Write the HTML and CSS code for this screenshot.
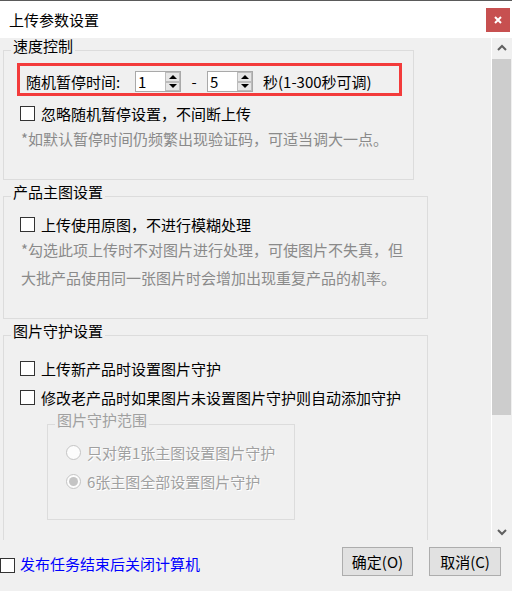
FILE: index.html
```html
<!DOCTYPE html>
<html lang="zh-CN">
<head>
    <meta charset="UTF-8">
    <meta name="viewport" content="width=device-width, initial-scale=1.0">
    <title>上传参数设置</title>
    <link rel="stylesheet" href="styles.css">
</head>
<body>

    <div class="window">
        <div class="titlebar">
            <span class="title">上传参数设置</span>
            <span class="close">
                <svg width="8" height="8" viewBox="0 0 8 8"><path d="M1 1L7 7M7 1L1 7" stroke="#fff" stroke-width="2"/></svg>
            </span>
        </div>

        <div class="main">
            <div class="content">
                <fieldset class="group g1">
                    <legend>速度控制</legend>
                    <div class="pause-row">
                        <span class="pause-label">随机暂停时间:</span>
                        <span class="spin">
                            <span class="spin-val">1</span>
                            <span class="spin-btns"><span class="spin-up"></span><span class="spin-down"></span></span>
                        </span>
                        <span class="dash">-</span>
                        <span class="spin">
                            <span class="spin-val">5</span>
                            <span class="spin-btns"><span class="spin-up"></span><span class="spin-down"></span></span>
                        </span>
                        <span class="unit">秒(1-300秒可调)</span>
                    </div>
                    <label class="check"><span class="box"></span>忽略随机暂停设置，不间断上传</label>
                    <p class="note">*如默认暂停时间仍频繁出现验证码，可适当调大一点。</p>
                </fieldset>

                <fieldset class="group g2">
                    <legend>产品主图设置</legend>
                    <label class="check"><span class="box"></span>上传使用原图，不进行模糊处理</label>
                    <p class="note">*勾选此项上传时不对图片进行处理，可使图片不失真，但<br>大批产品使用同一张图片时会增加出现重复产品的机率。</p>
                </fieldset>

                <fieldset class="group g3">
                    <legend>图片守护设置</legend>
                    <label class="check first"><span class="box"></span>上传新产品时设置图片守护</label>
                    <label class="check"><span class="box"></span>修改老产品时如果图片未设置图片守护则自动添加守护</label>
                    <fieldset class="group inner">
                        <legend>图片守护范围</legend>
                        <label class="radio"><span class="dot"></span>只对第1张主图设置图片守护</label>
                        <label class="radio"><span class="dot checked"></span>6张主图全部设置图片守护</label>
                    </fieldset>
                </fieldset>
            </div>

            <div class="scrollbar">
                <div class="sb-btn">
                    <svg width="10" height="7" viewBox="0 0 10 7"><path d="M1 6L5 2L9 6" fill="none" stroke="#606060" stroke-width="2"/></svg>
                </div>
                <div class="sb-thumb"></div>
                <div class="sb-track"></div>
                <div class="sb-btn">
                    <svg width="10" height="7" viewBox="0 0 10 7"><path d="M1 1L5 5L9 1" fill="none" stroke="#606060" stroke-width="2"/></svg>
                </div>
            </div>
        </div>

        <div class="footer">
            <label class="check shutdown"><span class="box"></span>发布任务结束后关闭计算机</label>
            <div class="buttons">
                <button class="btn ok">确定(O)</button>
                <button class="btn cancel">取消(C)</button>
            </div>
        </div>
    </div>

</body>
</html>
```

FILE: styles.css
```css
body {
    margin: 0;
    font-family: "Noto Sans CJK SC", sans-serif;
    font-size: 15px;
    color: #000;
    overflow: hidden;
}
.window {
    width: 512px;
    height: 591px;
    box-sizing: border-box;
    border-top: 1px solid #5a5a5a;
    background: #f0f0f0;
    display: flex;
    flex-direction: column;
}
.titlebar {
    height: 37px;
    background: white;
    display: flex;
    align-items: center;
    justify-content: space-between;
    padding-left: 9px;
}
.close {
    width: 24px;
    height: 24px;
    margin-right: 2px;
    background: #c75050;
    display: flex;
    align-items: center;
    justify-content: center;
}
.main {
    height: 504px;
    display: flex;
}
.content {
    flex: 1;
}
.group {
    box-sizing: border-box;
    margin: 0 0 4px 3px;
    padding: 0 0 26px 7px;
    border: 1px solid #dcdcdc;
    min-width: 0;
}
.group legend {
    padding: 0 2px 8px;
    line-height: 16px;
}
.g1 {
    width: 411px;
}
.g2 {
    width: 425px;
}
/* the last group runs on past the visible area, so it has no bottom edge */
.g3 {
    width: 425px;
    height: 217px;
    margin-bottom: 0;
    padding-bottom: 0;
    border-bottom: 0;
}
.pause-row {
    box-sizing: border-box;
    width: 385px;
    height: 33px;
    margin: 1px 0 3px 6px;
    padding: 4px 0 0 6px;
    border: 3px solid #f33b3b;
    display: flex;
    align-items: center;
}
.pause-label {
    width: 109px;
}
.spin {
    box-sizing: border-box;
    width: 46px;
    height: 21px;
    background: white;
    border: 1px solid #a9a9a9;
    display: flex;
}
.spin-val {
    flex: 1;
    padding-left: 2px;
    line-height: 19px;
}
.spin-btns {
    width: 15px;
    display: flex;
    flex-direction: column;
}
.spin-up,
.spin-down {
    flex: 1;
    box-sizing: border-box;
    border: 1px solid #bcbcbc;
    background: #e6e6e6;
    display: flex;
    align-items: center;
    justify-content: center;
}
.spin-up::after {
    content: "";
    border: 4px solid transparent;
    border-bottom: 4px solid #000;
    border-top: 0;
}
.spin-down::after {
    content: "";
    border: 4px solid transparent;
    border-top: 4px solid #000;
    border-bottom: 0;
}
.dash {
    width: 26px;
    text-align: center;
}
.unit {
    margin-left: 10px;
}
.check {
    display: flex;
    align-items: center;
    height: 29px;
    margin: 2px 0 0 9px;
}
.g3 .first {
    margin-top: 7px;
}
.g3 .check + .check {
    margin-top: 0;
}
.box {
    box-sizing: border-box;
    width: 15px;
    height: 15px;
    border: 1px solid #333;
    background: white;
    margin-right: 6px;
}
.note {
    margin: -3px 0 0 10px;
    line-height: 28px;
    color: #8a8a8a;
}
.inner {
    width: 248px;
    margin: 0 0 0 36px;
    padding-bottom: 23px;
}
.inner legend {
    color: #a0a0a0;
}
.radio {
    display: flex;
    align-items: center;
    height: 29px;
    margin-left: 11px;
    color: #a0a0a0;
    text-shadow: 1px 1px 0 #fff;
}
.inner legend + .radio {
    margin-top: 2px;
}
.dot {
    box-sizing: border-box;
    width: 15px;
    height: 15px;
    border: 1px solid #c4c4c4;
    border-radius: 50%;
    background: #fcfcfc;
    margin-right: 6px;
    display: flex;
    align-items: center;
    justify-content: center;
}
.dot.checked::after {
    content: "";
    width: 9px;
    height: 9px;
    border-radius: 50%;
    background: #c4c4c4;
}
.scrollbar {
    width: 20px;
    border-left: 1px solid #fff;
    display: flex;
    flex-direction: column;
}
.sb-btn {
    height: 19px;
    display: flex;
    align-items: center;
    justify-content: center;
}
.sb-thumb {
    height: 356px;
    margin: 2px 1px 0 0;
    background: #cdcdcd;
}
.sb-track {
    flex: 1;
}
.footer {
    flex: 1;
    display: flex;
    justify-content: space-between;
    align-items: flex-start;
    padding-top: 5px;
}
.shutdown {
    margin: 2px 0 0 0;
    color: #0000ff;
}
.shutdown .box {
    margin-top: 4px;
    margin-right: 5px;
}
.buttons {
    display: flex;
    gap: 16px;
    margin-right: 11px;
}
.btn {
    height: 29px;
    padding: 0;
    font-family: inherit;
    font-size: 15px;
    background: #e1e1e1;
    border: 1px solid #adadad;
    color: #000;
}
.ok {
    width: 71px;
}
.cancel {
    width: 72px;
}
```
